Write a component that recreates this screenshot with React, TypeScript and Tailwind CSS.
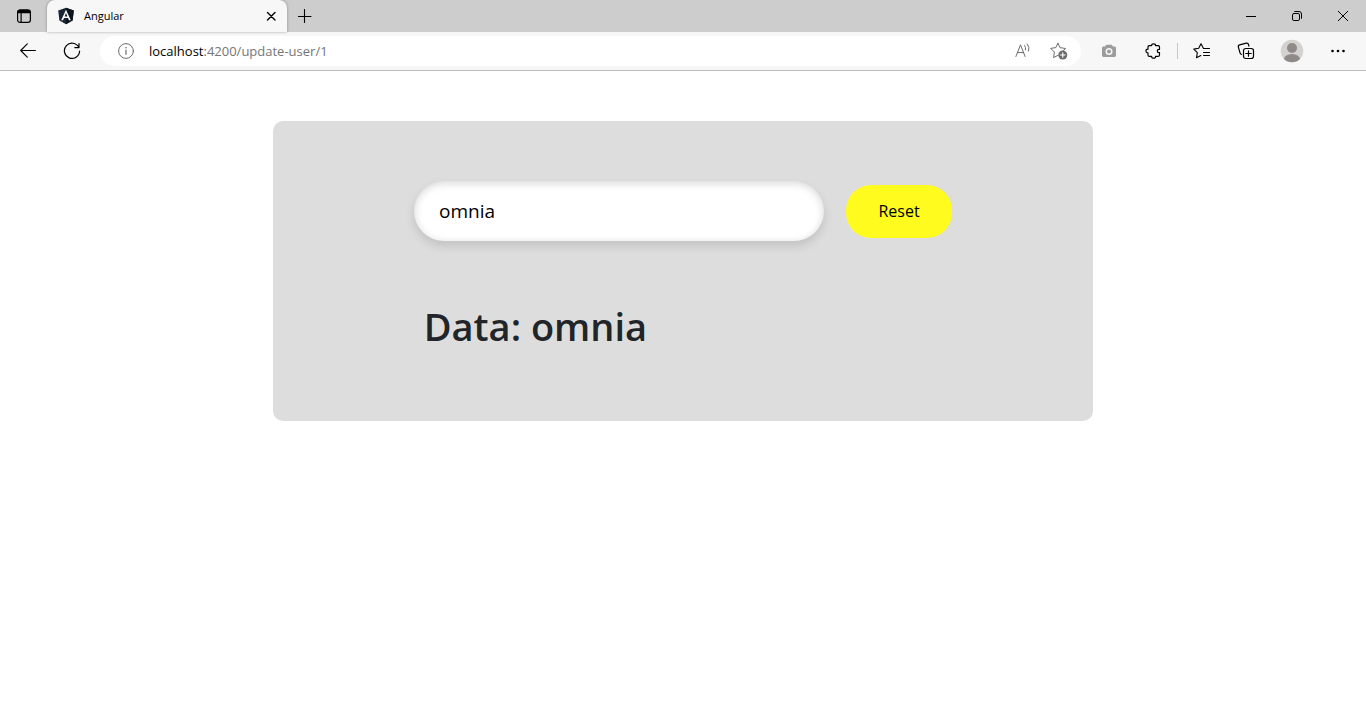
import { useState } from 'react';
import type { ReactNode } from 'react';

function IconButton({ label, className = 'w-11', children }: { label: string; className?: string; children: ReactNode }) {
  return (
    <button type="button" aria-label={label} className={`flex h-8 shrink-0 items-center justify-center ${className}`}>
      {children}
    </button>
  );
}

const line = { fill: 'none', stroke: 'currentColor', strokeLinecap: 'round', strokeLinejoin: 'round' } as const;

function TabStrip() {
  return (
    <div className="flex h-8 items-stretch bg-[#cdcdcd] text-black">
      <IconButton label="Tab actions" className="w-12">
        <svg width="16" height="16" viewBox="0 0 16 16" {...line} strokeWidth="1.2">
          <rect x="1.6" y="2" width="12.8" height="12.4" rx="2.4" />
          <path d="M2 3.8Q2 2 4 2h8q2 0 2 1.8v.8H2z" fill="currentColor" />
          <path d="M5.1 5v9" />
        </svg>
      </IconButton>
      <div className="-ml-px flex w-60 items-center rounded-t-lg bg-[#f7f7f7] pr-2 pl-2.5 shadow-[0_0_3px_rgba(0,0,0,0.35)]">
        <svg width="18" height="18" viewBox="0 0 18 18" aria-hidden="true">
          <path d="M9 .8 16.8 3.5 15.6 13.6 9 17.2 2.4 13.6 1.2 3.5z" fill="#1b2733" />
          <path d="M9 .8 16.8 3.5 15.6 13.6 9 17.2z" fill="#0d141c" />
          <path d="M9 2.8 4.2 13.3H6L7 10.9h4l1 2.4h1.8zM9 6.1l1.4 3.3H7.6z" fill="#fff" fillRule="evenodd" />
        </svg>
        <span className="ml-[9px] flex-1 font-['Open_Sans',sans-serif] text-[11px]">Angular</span>
        <button type="button" aria-label="Close tab" className="flex h-6 w-4 items-center justify-center">
          <svg width="10" height="10" viewBox="0 0 10 10" {...line} strokeWidth="1.4"><path d="m1.5 1.5 7.5 7.500m0-7.500L1.500 9" /></svg>
        </button>
      </div>
      <IconButton label="New tab" className="w-9">
        <svg width="14" height="14" viewBox="0 0 14 14" {...line} strokeWidth="1.1"><path d="M6.5.5v13M0 7.5h13" /></svg>
      </IconButton>
      <div className="ml-auto flex">
        <IconButton label="Minimize" className="w-[46px]">
          <svg width="10" height="10" viewBox="0 0 10 10" {...line} strokeLinecap="butt"><path d="M0 5.5h10" /></svg>
        </IconButton>
        <IconButton label="Restore" className="w-[46px]">
          <svg width="10" height="10" viewBox="0 0 10 10" {...line}>
            <rect x=".5" y="2.5" width="7" height="7" rx="1.4" />
            <path d="M2.7.5H7Q9.5.5 9.5 3v4.3" />
          </svg>
        </IconButton>
        <IconButton label="Close window" className="w-[46px]">
          <svg width="10" height="10" viewBox="0 0 10 10" {...line}><path d="m.2.2 9.6 9.6m0-9.6L.2 9.8" /></svg>
        </IconButton>
      </div>
    </div>
  );
}

function Toolbar() {
  return (
    <div className="flex h-[39px] items-center border-b border-[#bdbdbd] bg-[#f7f7f7] px-1.5 text-black">
      <IconButton label="Back">
        <svg width="16" height="16" viewBox="0 0 16 16" {...line} strokeWidth="1.1"><path d="M15.4 7.5H.7M7.3.9.7 7.5l6.6 6.6" /></svg>
      </IconButton>
      <IconButton label="Refresh">
        <svg width="18" height="18" viewBox="0 0 18 18" {...line} strokeWidth="1.2">
          <path d="M15.8 5.4A7.6 7.6 0 1 0 16.6 9M16 1.5v4.1h-4.2" />
        </svg>
      </IconButton>
      <div className="mx-1.5 flex h-[30px] min-w-0 flex-1 items-center rounded-full bg-white pr-1 pl-2.5">
        <IconButton label="View site information" className="w-8 text-[#6c6c6c]">
          <svg width="16" height="16" viewBox="0 0 16 16" {...line}>
            <circle cx="8" cy="8" r="7.4" />
            <path d="M8 7v4.3" strokeWidth="1.2" />
            <circle cx="8" cy="4.8" r=".8" fill="currentColor" stroke="none" />
          </svg>
        </IconButton>
        <a href="#" className="ml-[7px] flex-1 font-['Open_Sans',sans-serif] text-[13px] leading-5 text-[#767676]">
          <span className="text-black">localhost</span>:4200/update-user/1
        </a>
        <IconButton label="Read aloud" className="w-9 text-[#6c6c6c]">
          <svg width="16" height="16" viewBox="0 0 16 16" {...line}>
            <path d="M.9 13.5 5.5 1.8l4.6 11.7M2.5 9.6h6" />
            <path d="M9.6 2.6q1.5 1.700.9 4.200M12.200 1q2.800 3.200 1.400 7" />
          </svg>
        </IconButton>
        <IconButton label="Add to favorites" className="w-9 text-[#6c6c6c]">
          <svg width="18" height="18" viewBox="0 0 18 18" {...line}>
            <path d="m7.9 1.2 2.1 4.4 5.5.9-3.4 3.3M8.2 13.2l-4.6 2.4.8-5.5L.7 6.4l5.1-.8 2.1-4.4" />
            <circle cx="12.8" cy="13" r="4.5" fill="currentColor" stroke="none" />
            <path d="M12.8 10.7v4.6M10.5 13h4.6" stroke="#fff" strokeWidth="1.1" />
          </svg>
        </IconButton>
      </div>
      <IconButton label="Take screenshot" className="w-11 text-[#9c9c9c]">
        <svg width="16" height="16" viewBox="0 0 16 16" fill="currentColor">
          <path d="M5.3 1.8h5.4L12 3.6h1.6q1.4 0 1.4 1.4v7.6q0 1.4-1.4 1.4H2.4Q1 14 1 12.6V5q0-1.4 1.4-1.4H4z" />
          <circle cx="8" cy="8.6" r="3.5" fill="#f7f7f7" />
          <circle cx="8" cy="8.6" r="2" />
        </svg>
      </IconButton>
      <IconButton label="Extensions">
        <svg width="16" height="16" viewBox="0 0 16 16" {...line} strokeWidth="1.2">
          <path d="M4.3 2.600h2.300q0-1.800 2-1.800t2 1.800h2.400q1.500 0 1.500 1.500v2.200h-.6q-1.600 0-1.600 1.700t1.600 1.700h.6v2.200q0 1.500-1.500 1.500h-2.400q0 1.800-2 1.800t-2-1.800H4.300q-1.300 0-1.300-1.500V9.800Q1 9.800 1 8t2-1.800V4.100q0-1.500 1.300-1.500z" />
        </svg>
      </IconButton>
      <div className="mx-0.5 h-4 w-px shrink-0 bg-[#c8c8c8]" />
      <IconButton label="Favorites">
        <svg width="18" height="16" viewBox="0 0 18 16" {...line} strokeWidth="1.1">
          <path d="M10.500 5.500 8 .8 5.700 5.300.8 6.100l3.500 3.500-.8 5.200 4.300-2.300M10.500 5.500h6M10.500 9.500h6M10.500 12.500h6" />
        </svg>
      </IconButton>
      <IconButton label="Collections">
        <svg width="18" height="18" viewBox="0 0 18 18" {...line} strokeWidth="1.2">
          <rect x="6.5" y="6.5" width="10" height="10" rx="2.2" />
          <path d="M11.5 8.8v5.4M8.8 11.5h5.4M4.4 12.5Q3.2 12 2.9 10.7L1.4 5.2Q.9 3.4 2.6 2.9L9.3 1.2q1.7-.4 2.2 1.3l.4 1.6" />
        </svg>
      </IconButton>
      <IconButton label="Profile" className="mx-0.5 w-11">
        <svg width="24" height="24" viewBox="0 0 24 24">
          <clipPath id="avatar"><circle cx="12" cy="12" r="11.3" /></clipPath>
          <g clipPath="url(#avatar)">
            <path d="M0 0h24v24H0z" fill="#d5d1ce" />
            <circle cx="12" cy="9" r="5" fill="#8f8a87" />
            <ellipse cx="12" cy="20.2" rx="8" ry="5.2" fill="#8f8a87" />
          </g>
        </svg>
      </IconButton>
      <IconButton label="Settings and more">
        <svg width="14" height="4" viewBox="0 0 14 4" fill="currentColor">
          <circle cx="1.5" cy="2" r="1.3" /><circle cx="7" cy="2" r="1.3" /><circle cx="12.5" cy="2" r="1.3" />
        </svg>
      </IconButton>
    </div>
  );
}

export default function App() {
  const [name, setName] = useState('omnia');

  return (
    <div className="min-h-screen bg-white">
      <header>
        <TabStrip />
        <Toolbar />
      </header>
      <main className="px-4 pt-[50px] font-['Open_Sans',sans-serif]">
        <div className="mx-auto max-w-[820px] rounded-[10px] bg-[#ddd] pt-[60px] pb-[71px]">
          <form className="flex items-center justify-center gap-[22px]" onSubmit={(e) => e.preventDefault()}>
            <input
              type="text"
              aria-label="Name"
              value={name}
              onChange={(e) => setName(e.target.value)}
              className="h-[60px] w-1/2 rounded-full bg-white px-[25px] text-[19px] text-black shadow-[0_5px_10px_rgba(0,0,0,0.12),inset_0_2px_8px_rgba(0,0,0,0.17)] outline-none"
            />
            <button type="button" onClick={() => setName('')} className="h-[53px] w-[106px] rounded-[25px] bg-[#fffb1f] text-base text-black">
              Reset
            </button>
          </form>
          <h1 className="mx-auto mt-[61px] w-2/3 pl-3.5 text-[38px] leading-12 font-semibold text-[#212529]">Data: {name}</h1>
        </div>
      </main>
    </div>
  );
}
